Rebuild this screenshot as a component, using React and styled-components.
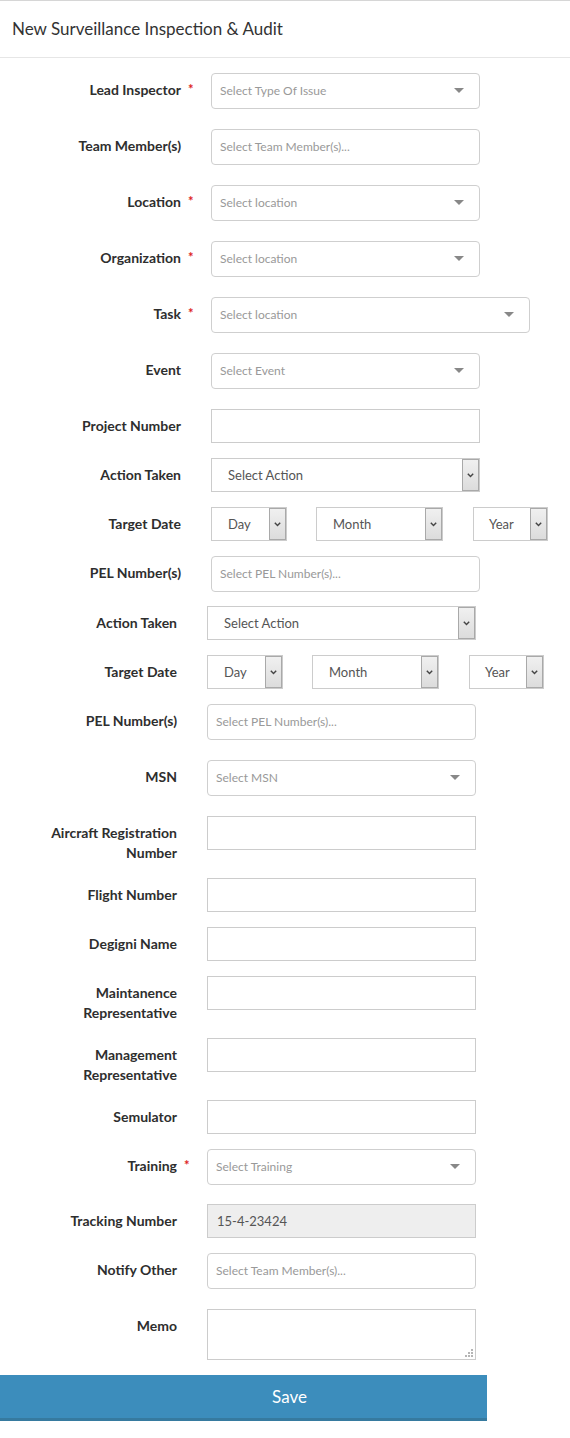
import React from "react";
import styled, { createGlobalStyle } from "styled-components";

const Global = createGlobalStyle`
  html, body { margin: 0; padding: 0; background: #fff; }
  body { font-family: "Lato", "Open Sans", "Liberation Sans", sans-serif; color: #333; }
  * { box-sizing: border-box; }
`;

const Page = styled.div`
  width: 570px;
  min-height: 1438px;
  background: #fff;
`;

const Header = styled.header`
  height: 58px;
  border-top: 1px solid #d6d6d6;
  border-bottom: 1px solid #e6e6e6;
  display: flex;
  align-items: center;
  padding: 0 12px 2px;
  font-size: 17px;
  color: #333;
`;

const Form = styled.form`
  padding-top: 15px;
`;

const Section = styled.div``;

const Row = styled.div`
  display: flex;
  align-items: flex-start;
  margin-bottom: ${(p) => p.$mb ?? 15}px;
`;

const Label = styled.label`
  flex: 0 0 ${(p) => p.$w}px;
  padding: 7px 15px 0 15px;
  text-align: right;
  font-weight: 700;
  font-size: 14px;
  line-height: 20px;
  color: #2e2e2e;
  white-space: nowrap;
`;

const LabelText = styled.span`
  position: relative;
`;

const Req = styled.span`
  position: absolute;
  left: calc(100% + 7px);
  top: -2px;
  color: #dd2222;
  font-size: 13px;
`;

const Field = styled.div`
  margin-left: 15px;
  display: flex;
  gap: ${(p) => p.$gap ?? 0}px;
`;

const Picker = styled.div`
  width: ${(p) => p.$w ?? 269}px;
  height: 36px;
  border: 1px solid #cfcfcf;
  border-radius: 4px;
  display: flex;
  align-items: center;
  justify-content: space-between;
  padding: 0 15px 2px 8px;
  font-size: 12px;
  color: #999;
  background: #fff;
`;

const Caret = styled.span`
  width: 0;
  height: 0;
  border-left: 5px solid transparent;
  border-right: 5px solid transparent;
  border-top: 5px solid #888;
`;

const TextInput = styled.div`
  width: ${(p) => p.$w ?? 269}px;
  height: ${(p) => p.$h ?? 34}px;
  border: 1px solid #cccccc;
  background: ${(p) => (p.$disabled ? "#eeeeee" : "#fff")};
  display: flex;
  align-items: center;
  padding-left: 9px;
  font-size: 13px;
  color: #555;
`;

const NativeSelect = styled.div`
  width: ${(p) => p.$w}px;
  height: 34px;
  margin-left: ${(p) => p.$ml ?? 0}px;
  border: 1px solid #cccccc;
  background: #fff;
  display: flex;
  align-items: stretch;
`;

const NativeText = styled.span`
  flex: 1;
  display: flex;
  align-items: center;
  padding-left: ${(p) => p.$pl ?? 16}px;
  font-size: 13px;
  color: #555;
`;

const ArrowBox = styled.span`
  width: 17px;
  border: 1px solid #a9a9a9;
  background: linear-gradient(#f0f0f0, #dcdcdc);
  display: flex;
  align-items: center;
  justify-content: center;
`;

const MemoWrap = styled.div`
  position: relative;
  width: 269px;
  height: 51px;
`;

const Memo = styled.textarea`
  width: 100%;
  height: 100%;
  border: 1px solid #cccccc;
  resize: none;
  outline: none;
  display: block;
  font-family: inherit;
`;

const Grip = styled.svg`
  position: absolute;
  right: 3px;
  bottom: 3px;
`;

const SaveButton = styled.button`
  display: block;
  width: 487px;
  height: 46px;
  margin-top: 15px;
  border: none;
  border-bottom: 3px solid #367a9f;
  background: #3c8dbc;
  color: #fff;
  font-family: inherit;
  font-size: 17px;
  padding: 0 0 0 92px;
  text-align: center;
`;

const Chevron = () => (
  <svg width="7" height="5" viewBox="0 0 7 5">
    <path d="M0.8 0.8 L3.5 3.6 L6.2 0.8" fill="none" stroke="#444" strokeWidth="1.4" />
  </svg>
);

const FieldLabel = ({ w, children, required }) => (
  <Label $w={w}>
    <LabelText>
      {children}
      {required && <Req>*</Req>}
    </LabelText>
  </Label>
);

const Select = ({ w, text, pl, ml }) => (
  <NativeSelect $w={w} $ml={ml}>
    <NativeText $pl={pl}>{text}</NativeText>
    <ArrowBox>
      <Chevron />
    </ArrowBox>
  </NativeSelect>
);

const DateRow = ({ lw }) => (
  <Row>
    <FieldLabel w={lw}>Target Date</FieldLabel>
    <Field $gap={29}>
      <Select w={76} text="Day" />
      <Select w={127} text="Month" />
      <Select w={75} text="Year" pl={15} ml={1} />
    </Field>
  </Row>
);

export default function App() {
  const A = 196;
  const B = 192;
  return (
    <Page>
      <Global />
      <Header>New Surveillance Inspection &amp; Audit</Header>
      <Form onSubmit={(e) => e.preventDefault()}>
        <Section>
          <Row $mb={20}>
            <FieldLabel w={A} required>Lead Inspector</FieldLabel>
            <Field><Picker>Select Type Of Issue<Caret /></Picker></Field>
          </Row>
          <Row $mb={20}>
            <FieldLabel w={A}>Team Member(s)</FieldLabel>
            <Field><Picker>Select Team Member(s)...</Picker></Field>
          </Row>
          <Row $mb={20}>
            <FieldLabel w={A} required>Location</FieldLabel>
            <Field><Picker>Select location<Caret /></Picker></Field>
          </Row>
          <Row $mb={20}>
            <FieldLabel w={A} required>Organization</FieldLabel>
            <Field><Picker>Select location<Caret /></Picker></Field>
          </Row>
          <Row $mb={20}>
            <FieldLabel w={A} required>Task</FieldLabel>
            <Field><Picker $w={319}>Select location<Caret /></Picker></Field>
          </Row>
          <Row $mb={20}>
            <FieldLabel w={A}>Event</FieldLabel>
            <Field><Picker>Select Event<Caret /></Picker></Field>
          </Row>
          <Row>
            <FieldLabel w={A}>Project Number</FieldLabel>
            <Field><TextInput /></Field>
          </Row>
          <Row>
            <FieldLabel w={A}>Action Taken</FieldLabel>
            <Field><Select w={269} text="Select Action" /></Field>
          </Row>
          <DateRow lw={A} />
          <Row $mb={14}>
            <FieldLabel w={A}>PEL Number(s)</FieldLabel>
            <Field><Picker>Select PEL Number(s)...</Picker></Field>
          </Row>
        </Section>
        <Section>
          <Row>
            <FieldLabel w={B}>Action Taken</FieldLabel>
            <Field><Select w={269} text="Select Action" /></Field>
          </Row>
          <DateRow lw={B} />
          <Row $mb={20}>
            <FieldLabel w={B}>PEL Number(s)</FieldLabel>
            <Field><Picker>Select PEL Number(s)...</Picker></Field>
          </Row>
          <Row $mb={20}>
            <FieldLabel w={B}>MSN</FieldLabel>
            <Field><Picker>Select MSN<Caret /></Picker></Field>
          </Row>
          <Row>
            <FieldLabel w={B}>Aircraft Registration<br />Number</FieldLabel>
            <Field><TextInput /></Field>
          </Row>
          <Row>
            <FieldLabel w={B}>Flight Number</FieldLabel>
            <Field><TextInput /></Field>
          </Row>
          <Row>
            <FieldLabel w={B}>Degigni Name</FieldLabel>
            <Field><TextInput /></Field>
          </Row>
          <Row>
            <FieldLabel w={B}>Maintanence<br />Representative</FieldLabel>
            <Field><TextInput /></Field>
          </Row>
          <Row>
            <FieldLabel w={B}>Management<br />Representative</FieldLabel>
            <Field><TextInput /></Field>
          </Row>
          <Row>
            <FieldLabel w={B}>Semulator</FieldLabel>
            <Field><TextInput /></Field>
          </Row>
          <Row $mb={19}>
            <FieldLabel w={B} required>Training</FieldLabel>
            <Field><Picker>Select Training<Caret /></Picker></Field>
          </Row>
          <Row>
            <FieldLabel w={B}>Tracking Number</FieldLabel>
            <Field><TextInput $disabled>15-4-23424</TextInput></Field>
          </Row>
          <Row $mb={20}>
            <FieldLabel w={B}>Notify Other</FieldLabel>
            <Field><Picker>Select Team Member(s)...</Picker></Field>
          </Row>
          <Row $mb={0}>
            <FieldLabel w={B}>Memo</FieldLabel>
            <Field>
              <MemoWrap>
                <Memo />
                <Grip width="8" height="8" viewBox="0 0 8 8">
                  <rect x="6" y="0" width="2" height="2" fill="#b5b5b5" />
                  <rect x="3" y="3" width="2" height="2" fill="#b5b5b5" />
                  <rect x="6" y="3" width="2" height="2" fill="#b5b5b5" />
                  <rect x="0" y="6" width="2" height="2" fill="#b5b5b5" />
                  <rect x="3" y="6" width="2" height="2" fill="#b5b5b5" />
                  <rect x="6" y="6" width="2" height="2" fill="#b5b5b5" />
                </Grip>
              </MemoWrap>
            </Field>
          </Row>
        </Section>
        <SaveButton type="submit">Save</SaveButton>
      </Form>
    </Page>
  );
}
